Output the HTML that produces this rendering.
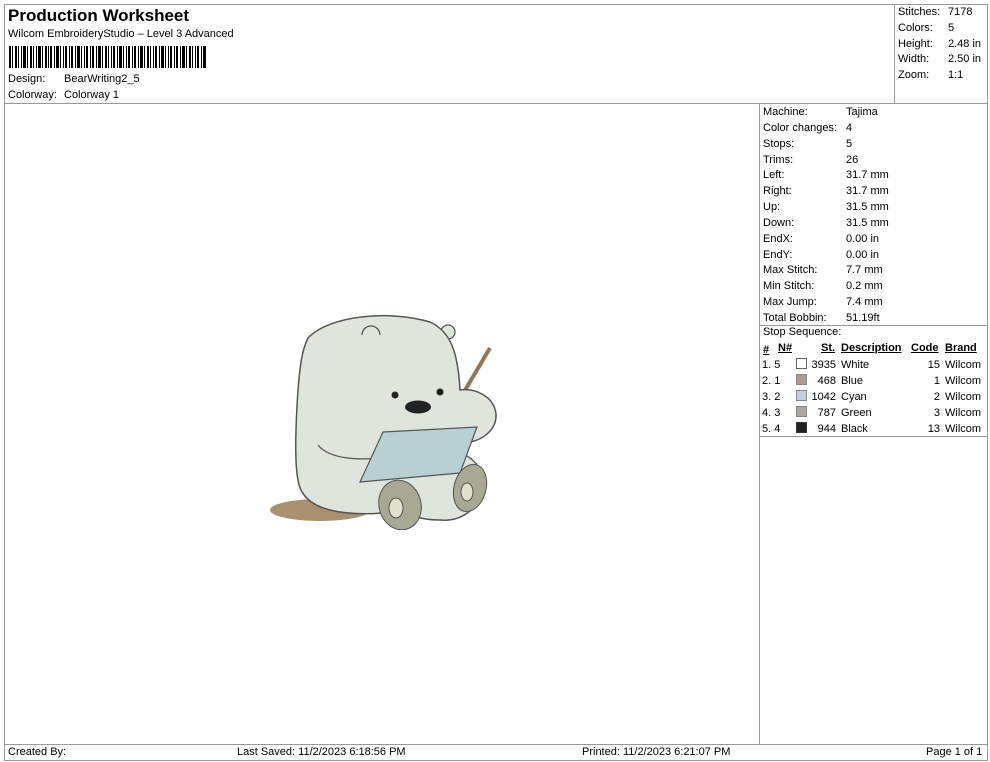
<!DOCTYPE html>
<html><head><style>
body{margin:0;width:990px;height:762px;background:#fff;font-family:"Liberation Sans",Arial,sans-serif;font-size:11px;color:#000;position:relative;overflow:hidden}
.a{position:absolute;white-space:nowrap}
.l{position:absolute;background:#999}
.r{text-align:right}
u{text-decoration:underline}
</style></head><body>
<div class="l" style="left:4px;top:4px;width:984px;height:1px"></div>
<div class="l" style="left:4px;top:4px;width:1px;height:757px"></div>
<div class="l" style="left:987px;top:4px;width:1px;height:757px"></div>
<div class="l" style="left:4px;top:103px;width:984px;height:1px"></div>
<div class="l" style="left:894px;top:4px;width:1px;height:100px"></div>
<div class="l" style="left:759px;top:103px;width:1px;height:642px"></div>
<div class="l" style="left:4px;top:744px;width:984px;height:1px"></div>
<div class="l" style="left:4px;top:760px;width:984px;height:1px"></div>
<div class="l" style="left:759px;top:325px;width:229px;height:1px"></div>
<div class="l" style="left:759px;top:436px;width:229px;height:1px"></div>

<div class="a" style="left:8px;top:6px;font-size:17px;font-weight:bold">Production Worksheet</div>
<div class="a" style="left:8px;top:28px">Wilcom EmbroideryStudio – Level 3 Advanced</div>
<svg class="a" style="left:9px;top:46px" width="198" height="22">
<g fill="#000">
<rect x="0" width="2" height="22"/><rect x="3" width="1" height="22"/><rect x="6" width="2" height="22"/><rect x="9" width="1" height="22"/><rect x="12" width="1" height="22"/><rect x="14" width="3" height="22"/><rect x="18" width="1" height="22"/><rect x="21" width="2" height="22"/><rect x="24" width="1" height="22"/><rect x="27" width="1" height="22"/><rect x="29" width="3" height="22"/><rect x="33" width="1" height="22"/><rect x="36" width="2" height="22"/><rect x="39" width="1" height="22"/><rect x="41" width="2" height="22"/><rect x="45" width="1" height="22"/><rect x="47" width="3" height="22"/><rect x="51" width="1" height="22"/><rect x="54" width="1" height="22"/><rect x="56" width="2" height="22"/><rect x="60" width="1" height="22"/><rect x="62" width="2" height="22"/><rect x="66" width="1" height="22"/><rect x="68" width="3" height="22"/><rect x="72" width="1" height="22"/><rect x="75" width="1" height="22"/><rect x="77" width="2" height="22"/><rect x="81" width="1" height="22"/><rect x="83" width="2" height="22"/><rect x="87" width="1" height="22"/><rect x="89" width="3" height="22"/><rect x="93" width="1" height="22"/><rect x="96" width="2" height="22"/><rect x="99" width="1" height="22"/><rect x="102" width="1" height="22"/><rect x="104" width="2" height="22"/><rect x="108" width="1" height="22"/><rect x="110" width="3" height="22"/><rect x="114" width="1" height="22"/><rect x="117" width="1" height="22"/><rect x="119" width="2" height="22"/><rect x="123" width="1" height="22"/><rect x="125" width="2" height="22"/><rect x="129" width="1" height="22"/><rect x="131" width="3" height="22"/><rect x="135" width="1" height="22"/><rect x="138" width="2" height="22"/><rect x="141" width="1" height="22"/><rect x="144" width="1" height="22"/><rect x="146" width="2" height="22"/><rect x="150" width="1" height="22"/><rect x="152" width="3" height="22"/><rect x="156" width="1" height="22"/><rect x="159" width="1" height="22"/><rect x="161" width="2" height="22"/><rect x="165" width="1" height="22"/><rect x="167" width="2" height="22"/><rect x="171" width="1" height="22"/><rect x="173" width="3" height="22"/><rect x="177" width="1" height="22"/><rect x="180" width="2" height="22"/><rect x="183" width="1" height="22"/><rect x="186" width="1" height="22"/><rect x="188" width="2" height="22"/><rect x="192" width="1" height="22"/><rect x="194" width="3" height="22"/>
</g></svg>
<div class="a" style="left:8px;top:73px">Design:</div><div class="a" style="left:64px;top:73px">BearWriting2_5</div>
<div class="a" style="left:8px;top:89px">Colorway:</div><div class="a" style="left:64px;top:89px">Colorway 1</div>

<div class="a" style="left:898px;top:5px;line-height:15.8px">Stitches:<br>Colors:<br>Height:<br>Width:<br>Zoom:</div>
<div class="a" style="left:948px;top:5px;line-height:15.8px">7178<br>5<br>2.48 in<br>2.50 in<br>1:1</div>

<div class="a" style="left:763px;top:105px;line-height:15.85px">Machine:<br>Color changes:<br>Stops:<br>Trims:<br>Left:<br>Right:<br>Up:<br>Down:<br>EndX:<br>EndY:<br>Max Stitch:<br>Min Stitch:<br>Max Jump:<br>Total Bobbin:</div>
<div class="a" style="left:846px;top:105px;line-height:15.85px">Tajima<br>4<br>5<br>26<br>31.7 mm<br>31.7 mm<br>31.5 mm<br>31.5 mm<br>0.00 in<br>0.00 in<br>7.7 mm<br>0.2 mm<br>7.4 mm<br>51.19ft</div>
<div class="a" style="left:763px;top:326px">Stop Sequence:</div>
<div class="a" style="left:763px;top:342px;font-weight:bold;line-height:16px"><u>#</u></div>
<div class="a" style="left:778px;top:342px;font-weight:bold"><u>N#</u></div>
<div class="a" style="left:821px;top:342px;font-weight:bold"><u>St.</u></div>
<div class="a" style="left:841px;top:342px;font-weight:bold"><u>Description</u></div>
<div class="a" style="left:911px;top:342px;font-weight:bold"><u>Code</u></div>
<div class="a" style="left:945px;top:342px;font-weight:bold"><u>Brand</u></div>
<div class="a" style="left:762px;top:358px;line-height:15.9px">1. 5<br>2. 1<br>3. 2<br>4. 3<br>5. 4</div>
<div class="a" style="left:796px;top:358px;width:9px;height:9px;border:1px solid #666;background:#fff"></div>
<div class="a" style="left:796px;top:374px;width:9px;height:9px;border:1px solid #888;background:#b09a94"></div>
<div class="a" style="left:796px;top:390px;width:9px;height:9px;border:1px solid #888;background:#c4d2e0"></div>
<div class="a" style="left:796px;top:406px;width:9px;height:9px;border:1px solid #888;background:#aaa89e"></div>
<div class="a" style="left:796px;top:422px;width:9px;height:9px;border:1px solid #333;background:#222"></div>
<div class="a r" style="left:805px;width:31px;top:358px;line-height:15.9px">3935<br>468<br>1042<br>787<br>944</div>
<div class="a" style="left:841px;top:358px;line-height:15.9px">White<br>Blue<br>Cyan<br>Green<br>Black</div>
<div class="a r" style="left:905px;width:35px;top:358px;line-height:15.9px">15<br>1<br>2<br>3<br>13</div>
<div class="a" style="left:945px;top:358px;line-height:15.9px">Wilcom<br>Wilcom<br>Wilcom<br>Wilcom<br>Wilcom</div>

<svg class="a" style="left:260px;top:310px" width="240" height="220" viewBox="0 0 240 220">
<ellipse cx="60" cy="200" rx="50" ry="11" fill="#a89070"/>
<circle cx="188" cy="22" r="7" fill="#dfe5dc" stroke="#555" stroke-width="1.3"/>
<line x1="198" y1="92" x2="230" y2="38" stroke="#8a7a5a" stroke-width="4"/>
<path d="M48 28 C70 5 130 0 170 12 C192 22 198 45 200 80 C215 78 234 86 236 104 C237 120 222 130 210 132 L205 145 C215 150 225 160 222 180 C218 200 200 212 180 210 C160 210 150 205 140 200 C120 205 90 205 70 200 C50 195 40 185 38 170 C34 150 36 110 38 80 C40 55 42 40 48 28Z" fill="#dfe5dc" stroke="#555" stroke-width="1.5"/>
<path d="M102 25 A9 9 0 1 1 120 25" fill="none" stroke="#555" stroke-width="1.3"/>
<path d="M58 135 C70 150 100 150 125 148" fill="none" stroke="#555" stroke-width="1.2"/>
<path d="M123 122 L217 117 L200 163 L100 172 Z" fill="#b8cfd4" stroke="#555" stroke-width="1.2"/>
<circle cx="135" cy="85" r="3.5" fill="#222"/><circle cx="180" cy="82" r="3.5" fill="#222"/>
<ellipse cx="158" cy="97" rx="13" ry="6.5" fill="#222"/>
<ellipse cx="140" cy="195" rx="21" ry="25" fill="#a8a894" stroke="#555" transform="rotate(-15 140 195)"/>
<ellipse cx="210" cy="178" rx="16" ry="24" fill="#a8a894" stroke="#555" transform="rotate(15 210 178)"/>
<ellipse cx="136" cy="198" rx="7" ry="10" fill="#e0e0cc" stroke="#555"/>
<ellipse cx="207" cy="182" rx="6" ry="9" fill="#e0e0cc" stroke="#555"/>
</svg>

<div class="a" style="left:8px;top:746px;font-size:11px">Created By:</div>
<div class="a" style="left:237px;top:746px">Last Saved: 11/2/2023 6:18:56 PM</div>
<div class="a" style="left:582px;top:746px">Printed: 11/2/2023 6:21:07 PM</div>
<div class="a" style="left:926px;top:746px">Page 1 of 1</div>
</body></html>
